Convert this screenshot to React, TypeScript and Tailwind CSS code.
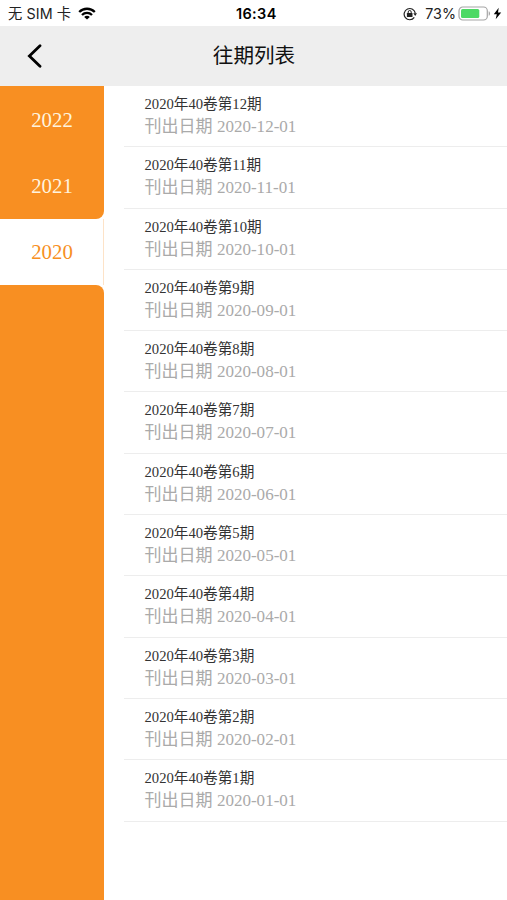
import React from 'react';

interface Issue {
  id: number;
  title: string;
  date: string;
}

const years = ['2022', '2021', '2020'];
const activeYear = '2020';

const issues: Issue[] = Array.from({ length: 12 }, (_, i) => {
  const month = 12 - i;
  return {
    id: month,
    title: `2020年40卷第${month}期`,
    date: `2020-${String(month).padStart(2, '0')}-01`,
  };
});

const WifiIcon = () => (
  <svg viewBox="0 0 18 13" className="ml-[7px] h-[13px] w-[18px]" fill="none" stroke="#000" strokeWidth="2.3">
    <path d="M1.2 5a11 11 0 0 1 15.6 0" />
    <path d="M4 8a7 7 0 0 1 10 0" />
    <path d="M9 12.6 6.2 9.9a3.8 3.8 0 0 1 5.6 0Z" fill="#000" stroke="none" />
  </svg>
);

const RotationLockIcon = () => (
  <svg viewBox="0 0 14 14" className="h-[14px] w-[14px]" fill="none" stroke="#222">
    <path d="M11.3 10.4A5.6 5.6 0 1 1 12.3 6.4" strokeWidth="1.2" />
    <path d="M10.3 6.3h3.7l-1.8 2.6Z" fill="#222" stroke="none" />
    <rect x="3.9" y="6.1" width="5.6" height="4" rx="0.5" fill="#222" stroke="none" />
    <path d="M5.2 6.5V5a1.5 1.5 0 0 1 3 0v1.5" strokeWidth="1" />
  </svg>
);

const BatteryIcon = () => (
  <svg viewBox="0 0 33 15" className="ml-[2px] h-[15px] w-[33px]">
    <rect x="1" y="1" width="28.3" height="13" rx="3.8" fill="#fff" stroke="#a5a5a5" strokeWidth="1.2" />
    <rect x="3" y="3" width="18.3" height="9" rx="1.6" fill="#4cd964" />
    <path d="M30.7 5.2c1.8.6 1.8 4 0 4.6Z" fill="#a5a5a5" />
  </svg>
);

const BoltIcon = () => (
  <svg viewBox="0 0 9 13" className="ml-[2px] h-[13px] w-[9px]">
    <path d="M5.7.8.8 7.2h3L2.7 12.2 8.2 5.5H5Z" fill="#000" />
  </svg>
);

const StatusBar = () => (
  <div className="relative flex h-[26px] items-center justify-between bg-white pt-px pl-2 pr-[5px] font-['Inter','Noto_Sans_CJK_SC',sans-serif] text-[#222]">
    <div className="flex items-center whitespace-nowrap">
      <span className="text-[14.3px] tracking-[0.1px]">无 SIM 卡</span>
      <WifiIcon />
    </div>
    <span className="absolute left-[236px] text-[14.5px] font-semibold tracking-[0.35px] text-black">16:34</span>
    <div className="flex items-center">
      <RotationLockIcon />
      <span className="ml-[8px] text-[14.3px]">73%</span>
      <BatteryIcon />
      <BoltIcon />
    </div>
  </div>
);

const Header = () => (
  <header className="grid h-[60px] grid-cols-[1fr_auto_1fr] items-center bg-[#eeeeee]">
    <button className="flex pl-[27px]" aria-label="返回">
      <svg viewBox="0 0 15 24" className="h-6 w-[15px]" fill="none" stroke="#000" strokeWidth="2.8">
        <path d="M13 1.8 2.4 12 13 22.2" strokeLinecap="round" strokeLinejoin="miter" />
      </svg>
    </button>
    <h1 className="pb-1 pl-px font-['Noto_Sans_CJK_SC',sans-serif] text-[20.6px] leading-none text-[#111]">往期列表</h1>
  </header>
);

const YearTabs = () => (
  <nav className="flex w-[104px] shrink-0 flex-col bg-white font-['Liberation_Serif',serif] text-[20.8px]">
    {years.map((year) => {
      const isActive = year === activeYear;
      return (
        <button
          key={year}
          className={`h-[66.3px] w-full ${isActive
              ? 'border-r border-r-[#fde3c8] bg-white pl-px text-[#f78f23]'
              : 'bg-[#f88f22] text-[#fff4df]'
            } ${year === '2021' ? 'rounded-br-[8px]' : ''}`}
        >
          {year}
        </button>
      );
    })}
    <div className="flex-1 rounded-tr-[8px] bg-[#f88f22]" />
  </nav>
);

const IssueRow: React.FC<{ issue: Issue }> = ({ issue }) => (
  <li className="h-[61.3px] border-b border-[#ededed] pt-[7px] pl-[20.5px]">
    <div className="text-[14.65px] leading-[22px] text-[#333]">{issue.title}</div>
    <div className="text-[17.05px] leading-[23px] text-[#aaa]">刊出日期 {issue.date}</div>
  </li>
);

export default function App() {
  return (
    <div className="flex h-[900px] w-[507px] flex-col overflow-hidden bg-white">
      <StatusBar />
      <Header />
      <main className="flex min-h-0 flex-1">
        <YearTabs />
        <ul className="ml-5 flex-1 font-['Liberation_Serif','Noto_Sans_CJK_SC',serif]">
          {issues.map((issue) => (
            <IssueRow key={issue.id} issue={issue} />
          ))}
        </ul>
      </main>
    </div>
  );
}
